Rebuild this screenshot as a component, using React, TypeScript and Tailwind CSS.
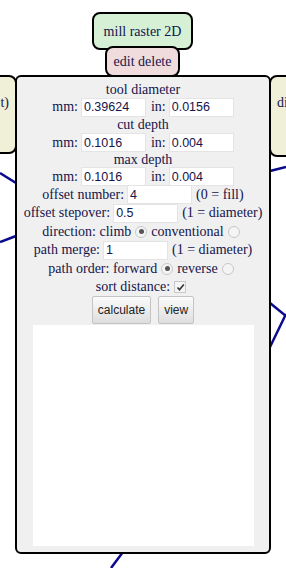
function Num({ value }: { value: string }) {
  return (
    <input
      readOnly
      value={value}
      className="w-[65px] h-[19px] bg-white border border-[#e4e4e4] px-[2px] font-['Liberation_Sans',Arial,sans-serif] text-[12.5px] text-[#14144c] align-middle outline-none"
    />
  )
}

function Radio({ checked }: { checked?: boolean }) {
  return (
    <span className="inline-flex w-[12px] h-[12px] rounded-full border border-[#c8c8c8] bg-[#f4f4f4] items-center justify-center mx-[4px]">
      {checked && <span className="w-[5px] h-[5px] rounded-full bg-[#555]" />}
    </span>
  )
}

function Check() {
  return (
    <span className="inline-flex w-[12px] h-[12px] border border-[#c8c8c8] bg-[#f4f4f4] items-center justify-center mx-[4px]">
      <svg width="9" height="9" viewBox="0 0 9 9">
        <path d="M1.5 4.5 L3.5 6.8 L7.8 1.5" stroke="#333" strokeWidth="1.6" fill="none" />
      </svg>
    </span>
  )
}

function Btn({ label }: { label: string }) {
  return (
    <button className="h-[28px] px-[5px] border border-[#c4c4c4] rounded-[2px] bg-gradient-to-b from-[#fbfbfb] to-[#dedede] font-['Liberation_Sans',Arial,sans-serif] text-[12px] text-[#222]">
      {label}
    </button>
  )
}

export default function App() {
  return (
    <div className="relative w-[286px] h-[568px] overflow-hidden bg-white font-['Liberation_Serif','Times_New_Roman',serif] text-[14px] text-[#14144c]">
      {/* links between modules */}
      <svg className="absolute inset-0" width="286" height="568">
        <g stroke="#0a0a8c" strokeWidth="2.5" fill="none">
          <line x1="0" y1="173" x2="16" y2="183" />
          <line x1="0" y1="242" x2="16" y2="236" />
          <line x1="270" y1="171" x2="286" y2="167" />
          <line x1="270" y1="303" x2="286" y2="316" />
          <line x1="270" y1="347" x2="286" y2="314" />
          <line x1="111" y1="568" x2="123" y2="552" />
        </g>
      </svg>

      {/* neighbour modules, cut by the window edge */}
      <div className="absolute left-[-70px] top-[75px] w-[87px] h-[79px] bg-[#f0f0d8] border-2 border-black rounded-[8px] flex justify-end pt-[15px] pr-[6px]">
        <span>t)</span>
      </div>
      <div className="absolute left-[269px] top-[75px] w-[90px] h-[82px] bg-[#f0f0d8] border-2 border-black rounded-[8px] pt-[15px] pl-[6px]">
        <span>di</span>
      </div>

      {/* title */}
      <div className="absolute left-[92px] top-[12px] w-[101px] h-[38px] bg-[#d5f0d5] border-2 border-black rounded-[8px] flex items-center justify-center">
        mill raster 2D
      </div>
      <div className="absolute left-[105px] top-[46px] w-[75px] h-[31px] bg-[#f0dcdc] border-2 border-black rounded-[8px] flex items-center justify-center">
        edit delete
      </div>

      {/* module panel */}
      <div className="absolute left-[15px] top-[75px] w-[256px] h-[479px] bg-[#f0f0f0] border-2 border-black rounded-[6px] flex flex-col items-center pt-[4px] leading-4">
        <div className="h-[17px] flex items-center">tool diameter</div>
        <div className="flex items-center gap-[3px] h-[18px]">
          mm: <Num value="0.39624" /> <span className="ml-[2px]">in:</span> <Num value="0.0156" />
        </div>
        <div className="h-[18px] flex items-center">cut depth</div>
        <div className="flex items-center gap-[3px] h-[17px]">
          mm: <Num value="0.1016" /> <span className="ml-[2px]">in:</span> <Num value="0.004" />
        </div>
        <div className="h-[17px] flex items-center">max depth</div>
        <div className="flex items-center gap-[3px] h-[17px]">
          mm: <Num value="0.1016" /> <span className="ml-[2px]">in:</span> <Num value="0.004" />
        </div>
        <div className="flex items-center gap-[3px] h-[19px]">
          offset number: <Num value="4" /> <span className="ml-[1px]">(0 = fill)</span>
        </div>
        <div className="flex items-center gap-[3px] h-[18px]">
          offset stepover: <Num value="0.5" /> <span className="ml-[1px]">(1 = diameter)</span>
        </div>
        <div className="flex items-center h-[19px]">
          direction: climb<Radio checked /> conventional<Radio />
        </div>
        <div className="flex items-center gap-[3px] h-[18px]">
          path merge: <Num value="1" /> <span className="ml-[1px]">(1 = diameter)</span>
        </div>
        <div className="flex items-center h-[19px]">
          path order: forward<Radio checked /> reverse<Radio />
        </div>
        <div className="flex items-center h-[18px]">
          sort distance:<Check />
        </div>
        <div className="flex gap-[7px]">
          <Btn label="calculate" />
          <Btn label="view" />
        </div>
        <div className="w-[221px] h-[221px] bg-white mt-[1px]" />
      </div>
    </div>
  )
}
